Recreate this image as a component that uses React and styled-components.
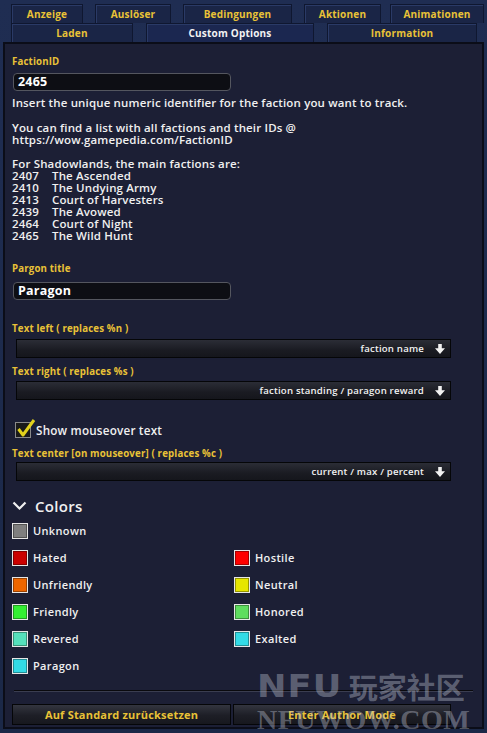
import React from "react";
import styled, { createGlobalStyle } from "styled-components";

const GlobalStyle = createGlobalStyle`
  html, body {
    margin: 0;
    padding: 0;
    background: #1d2b4e;
  }
  body {
    font-family: "Open Sans", "DejaVu Sans", sans-serif;
    width: 487px;
    height: 733px;
    overflow: hidden;
  }
`;

const gold = "#e9c237";

const Frame = styled.div`
  position: relative;
  width: 487px;
  height: 733px;
  background: linear-gradient(#1f2d52, #1b2847);
  display: flex;
  flex-direction: column;
`;

const TabRow = styled.div`
  display: flex;
  height: 19px;
  padding: 0 12px 0 11px;
  gap: ${(p) => p.$gap || 12}px;
  margin-top: ${(p) => p.$top || 0}px;
`;

const Tab = styled.div`
  width: ${(p) => p.$w}px;
  flex: none;
  box-sizing: border-box;
  border: 1px solid #0f1730;
  border-bottom: none;
  background: ${(p) => (p.$active ? "#1b2750" : "#1a2546")};
  color: ${(p) => (p.$active ? "#f2f2f2" : gold)};
  font-size: 10px;
  font-weight: 700;
  display: flex;
  align-items: center;
  justify-content: center;
  letter-spacing: 0.2px;
  box-shadow: inset 1px 1px 0 #2a3a66;
`;

const Panel = styled.div`
  margin: 0 3px 4px 3px;
  flex: 1;
  background: #1c1f35;
  border: 2px solid #0b0d18;
  box-sizing: border-box;
  padding: 12px 10px 0 7px;
  display: flex;
  flex-direction: column;
  color: #f0f0f0;
`;

const Label = styled.div`
  color: ${gold};
  font-size: 9.7px;
  font-weight: 700;
  height: 12px;
  line-height: 12px;
  letter-spacing: 0.15px;
  margin-top: ${(p) => p.$top || 0}px;
`;

const Input = styled.div`
  margin: ${(p) => p.$top || 5}px 0 0 1px;
  width: 218px;
  height: 18px;
  box-sizing: border-box;
  background: #0d0e14;
  border: 1px solid #54565f;
  border-radius: 4px;
  font-size: 12.5px;
  font-weight: 700;
  line-height: 16px;
  padding-left: 4px;
  color: #ffffff;
  letter-spacing: 0.2px;
`;

const Text = styled.div`
  font-size: 11.5px;
  font-weight: 600;
  line-height: 12px;
  white-space: pre;
  margin-top: ${(p) => p.$top || 0}px;
  letter-spacing: 0.15px;
`;

const FactionRow = styled.div`
  display: grid;
  grid-template-columns: 40px 1fr;
  font-size: 11.5px;
  font-weight: 600;
  line-height: 12px;
  letter-spacing: 0.15px;
`;

const Dropdown = styled.div`
  margin: ${(p) => p.$top || 4}px 0 0 4px;
  width: 435px;
  height: 19px;
  box-sizing: border-box;
  border: 1px solid #050608;
  background: linear-gradient(#2b2d36, #1a1b22 60%, #15161c);
  display: flex;
  align-items: center;
  justify-content: flex-end;
  padding-right: 5px;
  gap: 11px;
  font-size: 9.6px;
  font-weight: 600;
  color: #f2f2f2;
  letter-spacing: 0.2px;
`;

const CheckRow = styled.div`
  display: flex;
  align-items: center;
  gap: 5px;
  margin: 22px 0 0 3px;
  height: 16px;
  font-size: 11.7px;
  font-weight: 600;
  letter-spacing: 0.2px;
`;

const CheckBox = styled.div`
  width: 16px;
  height: 16px;
  box-sizing: border-box;
  border: 1px solid #8a8a8a;
  background: #1a1a1a;
  position: relative;
`;

const CheckMark = styled.svg`
  position: absolute;
  left: 0;
  top: -5px;
`;

const Heading = styled.div`
  display: flex;
  align-items: center;
  gap: 8px;
  margin: 15px 0 0 0;
  font-size: 15px;
  font-weight: 600;
  height: 20px;
  letter-spacing: 0.3px;
`;

const ColorGrid = styled.div`
  display: grid;
  grid-template-columns: 222px 1fr;
  grid-auto-rows: 27px;
  margin: 1px 0 0 0;
`;

const ColorItem = styled.div`
  display: flex;
  align-items: center;
  gap: 5px;
  font-size: 11px;
  font-weight: 600;
  letter-spacing: 0.35px;
  grid-column: ${(p) => (p.$wide ? "1 / -1" : "auto")};
`;

const Swatch = styled.div`
  width: 16px;
  height: 16px;
  box-sizing: border-box;
  border: 1px solid #e6e6e6;
  background: ${(p) => p.$c};
  box-shadow: inset 0 0 0 1px rgba(0, 0, 0, 0.35);
`;

const Separator = styled.div`
  margin: 11px 0 0 2px;
  width: 459px;
  height: 1px;
  background: #0a0a0e;
  border-bottom: 1px solid #3a3d50;
`;

const ButtonRow = styled.div`
  display: flex;
  gap: 2px;
  margin: 12px 0 0 0;
`;

const Button = styled.div`
  width: ${(p) => p.$w}px;
  height: 21px;
  box-sizing: border-box;
  border: 1px solid #050608;
  background: linear-gradient(#33353f, #1d1e26 55%, #17181e);
  color: ${gold};
  font-size: 11px;
  font-weight: 700;
  display: flex;
  align-items: center;
  justify-content: center;
  letter-spacing: 0.2px;
`;

const Watermark = styled.div`
  position: absolute;
  left: 257px;
  top: 670px;
  color: rgba(195, 200, 215, 0.4);
  pointer-events: none;
  display: flex;
  flex-direction: column;
  line-height: 1;
`;

const WaterTop = styled.div`
  font-family: "Noto Sans CJK SC", "Noto Sans", sans-serif;
  font-size: 29px;
  font-weight: 700;
  display: flex;
  align-items: center;
`;

const WaterLatin = styled.span`
  font-family: "DejaVu Sans", sans-serif;
  font-size: 32px;
  font-weight: 700;
  letter-spacing: 1px;
  transform: scaleX(1.1);
  transform-origin: left center;
  margin-right: 14px;
`;

const WaterBottom = styled.div`
  font-family: "Liberation Serif", serif;
  font-size: 28px;
  font-weight: 700;
  margin-top: 4px;
  letter-spacing: 0.5px;
`;

const Arrow = () => (
  <svg width="10" height="10" viewBox="0 0 10 10">
    <path d="M3.2 0h3.6v4.2H10L5 10 0 4.2h3.2z" fill="#f2f2f2" />
  </svg>
);

const factions = [
  ["2407", "The Ascended"],
  ["2410", "The Undying Army"],
  ["2413", "Court of Harvesters"],
  ["2439", "The Avowed"],
  ["2464", "Court of Night"],
  ["2465", "The Wild Hunt"],
];

const colors = [
  { name: "Unknown", c: "#7f7f7f", wide: true },
  { name: "Hated", c: "#cc0000" },
  { name: "Hostile", c: "#ff0000" },
  { name: "Unfriendly", c: "#ee6600" },
  { name: "Neutral", c: "#e6e600" },
  { name: "Friendly", c: "#33ee33" },
  { name: "Honored", c: "#5fdd5f" },
  { name: "Revered", c: "#55e0bb" },
  { name: "Exalted", c: "#33dbe6" },
  { name: "Paragon", c: "#33dbe6" },
];

const App = () => (
  <Frame>
    <GlobalStyle />
    <TabRow $top={4} $gap={12}>
      <Tab $w={72}>Anzeige</Tab>
      <Tab $w={76}>Auslöser</Tab>
      <Tab $w={109}>Bedingungen</Tab>
      <Tab $w={77}>Aktionen</Tab>
      <Tab $w={94} style={{ marginLeft: -3 }}>Animationen</Tab>
    </TabRow>
    <TabRow $gap={13}>
      <Tab $w={122}>Laden</Tab>
      <Tab $w={168} $active>Custom Options</Tab>
      <Tab $w={150}>Information</Tab>
    </TabRow>
    <Panel>
      <Label>FactionID</Label>
      <Input>2465</Input>
      <Text $top={6}>Insert the unique numeric identifier for the faction you want to track.</Text>
      <Text $top={13}>You can find a list with all factions and their IDs @</Text>
      <Text>https://wow.gamepedia.com/FactionID</Text>
      <Text $top={12}>For Shadowlands, the main factions are:</Text>
      {factions.map(([id, name]) => (
        <FactionRow key={id}>
          <span>{id}</span>
          <span>{name}</span>
        </FactionRow>
      ))}
      <Label $top={21}>Pargon title</Label>
      <Input $top={7}>Paragon</Input>
      <Label $top={23}>Text left ( replaces %n )</Label>
      <Dropdown>
        faction name <Arrow />
      </Dropdown>
      <Label $top={8}>Text right ( replaces %s )</Label>
      <Dropdown $top={3}>
        faction standing / paragon reward <Arrow />
      </Dropdown>
      <CheckRow>
        <CheckBox>
          <CheckMark width="20" height="20" viewBox="0 0 20 20">
            <path d="M2.5 11l4.5 6L18 2" stroke="#e3d21c" strokeWidth="3" fill="none" strokeLinejoin="round" />
          </CheckMark>
        </CheckBox>
        Show mouseover text
      </CheckRow>
      <Label $top={10}>Text center [on mouseover] ( replaces %c )</Label>
      <Dropdown $top={2}>
        current / max / percent <Arrow />
      </Dropdown>
      <Heading>
        <svg width="15" height="10" viewBox="0 0 15 10">
          <path d="M1.5 1.5l6 6 6-6" stroke="#f0f0f0" strokeWidth="2.2" fill="none" />
        </svg>
        Colors
      </Heading>
      <ColorGrid>
        {colors.map((c) => (
          <ColorItem key={c.name} $wide={c.wide}>
            <Swatch $c={c.c} />
            {c.name}
          </ColorItem>
        ))}
      </ColorGrid>
      <Separator />
      <ButtonRow>
        <Button $w={219}>Auf Standard zurücksetzen</Button>
        <Button $w={218}>Enter Author Mode</Button>
      </ButtonRow>
    </Panel>
    <Watermark>
      <WaterTop>
        <WaterLatin>NFU</WaterLatin>
        玩家社区
      </WaterTop>
      <WaterBottom>NFUWOW.COM</WaterBottom>
    </Watermark>
  </Frame>
);

export default App;
